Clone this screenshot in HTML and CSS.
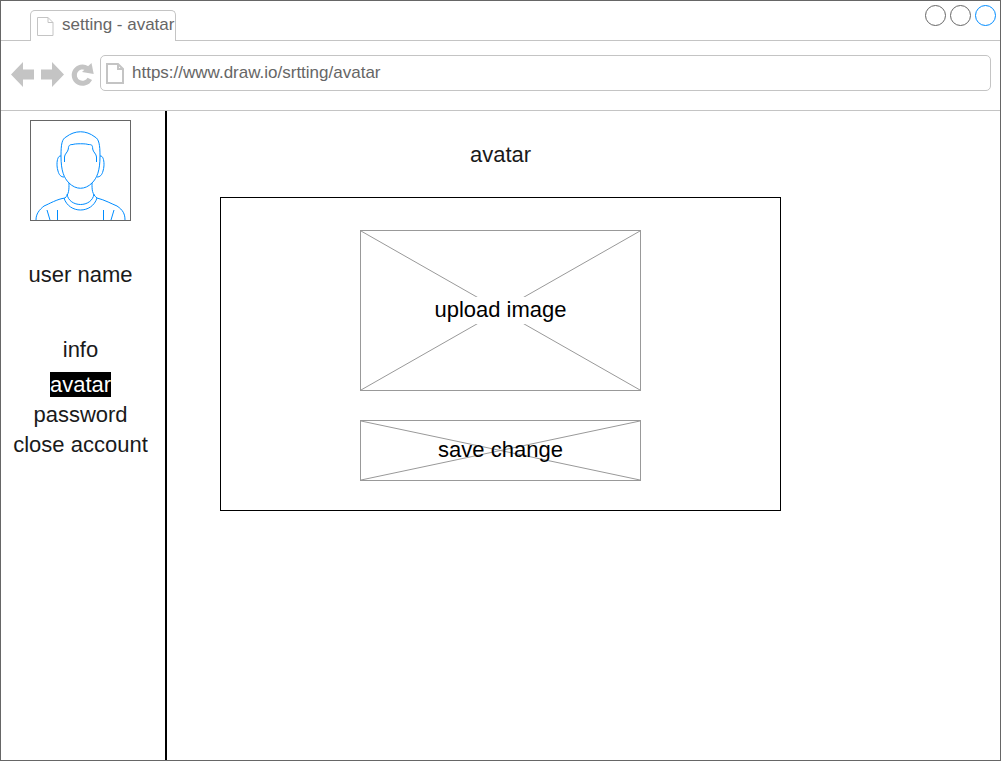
FILE: index.html
```html
<!DOCTYPE html>
<html lang="en">
<head>
<meta charset="utf-8">
<meta name="viewport" content="width=device-width, initial-scale=1">
<title>setting - avatar</title>
<link rel="stylesheet" href="styles.css">
</head>
<body>
<div class="browser">
  <header class="tab-strip">
    <div class="tab">
      <svg class="tab-icon" width="17" height="20" viewBox="0 0 17 20" aria-hidden="true">
        <path d="M.5.5H11L16 5.500V18.500H.5ZM11 .5V5.500H16"/>
      </svg>
      <span class="tab-title">setting - avatar</span>
    </div>
    <div class="window-controls">
      <button class="window-button" type="button" aria-label="Minimize"></button>
      <button class="window-button" type="button" aria-label="Maximize"></button>
      <button class="window-button window-button-close" type="button" aria-label="Close"></button>
    </div>
  </header>
  <div class="toolbar">
    <button class="tool" type="button" aria-label="Back">
      <svg width="23" height="25" viewBox="0 0 23 25" aria-hidden="true"><path class="fill" d="M0 12.500 12 0V7.500H23V17.500H12V25Z"/></svg>
    </button>
    <button class="tool" type="button" aria-label="Forward">
      <svg width="23" height="25" viewBox="0 0 23 25" aria-hidden="true"><path class="fill" d="M23 12.500 11 0V7.500H0V17.500H11V25Z"/></svg>
    </button>
    <button class="tool" type="button" aria-label="Reload">
      <svg class="reload" width="22" height="23" viewBox="0 0 22 23" aria-hidden="true"><path class="ring" d="M16 5.300A8.200 8.200 0 1 0 18.800 15.800"/><path class="fill" d="M20.500 0 22.700 11 11 9Z"/></svg>
    </button>
    <label class="address">
      <svg class="address-icon" width="18" height="21" viewBox="0 0 18 21" aria-hidden="true">
        <path d="M1 1H12L17 6V20H1ZM12 1V6H17"/>
      </svg>
      <input class="address-input" type="text" aria-label="Address" value="https://www.draw.io/srtting/avatar">
    </label>
  </div>
  <div class="page">
    <aside class="sidebar">
      <svg class="avatar" viewBox="0 0 99 99" role="img" aria-label="User picture">
        <path d="M30 35C30 23 31 18 35 16C44 9 55 9 64 16C68 18 69 24 69 35"/>
        <path d="M33.500 41V36C33.500 33 37 31 37.300 28C37.500 24 39 23.500 42 23.500C43 22.500 56 22.500 57 23.500C61 23.500 61.500 24 61.700 28C62 31 65.500 33 65.500 36V41"/>
        <path d="M30 35C30 50 33 57 38 62C45 69 54 69 61 62C66 57 69 50 69 35"/>
        <path d="M30 35C26 34 25 44 27 50C28 54 30 56 33 56M69 35C73 34 74 44 72 50C71 54 69 56 66 56"/>
        <path d="M38 62C38 69 38 73 34 77C26 78 18 83 13 85C8 89 5 93 5 99M61 62C61 69 61 73 66 77C74 79 81 83 86 85C92 89 94 93 94 99"/>
        <path d="M36 73C38 87 61 87 63 73M33 77C38 93 61 93 66 77"/>
        <path d="M16 89 19 99M26.500 89V99M72.500 89V99M83 89 80 99"/>
      </svg>
      <p class="user-name">user name</p>
      <nav class="menu">
        <a class="menu-link" href="#info">info</a>
        <a class="menu-link menu-link-current" href="#avatar" aria-current="page">avatar</a>
        <a class="menu-link" href="#password">password</a>
        <a class="menu-link" href="#close">close account</a>
      </nav>
    </aside>
    <main class="content">
      <h1 class="title">avatar</h1>
      <section class="card">
        <button class="placeholder placeholder-image" type="button">
          <svg class="cross" viewBox="0 0 100 100" preserveAspectRatio="none" aria-hidden="true"><path d="M0 0 100 100M100 0 0 100"/></svg>
          <span class="placeholder-label">upload image</span>
        </button>
        <button class="placeholder placeholder-action" type="button">
          <svg class="cross" viewBox="0 0 100 100" preserveAspectRatio="none" aria-hidden="true"><path d="M0 0 100 100M100 0 0 100"/></svg>
          <span class="placeholder-label">save change</span>
        </button>
      </section>
    </main>
  </div>
</div>
</body>
</html>
```
FILE: styles.css
```css
* {
  box-sizing: border-box;
}

body {
  margin: 0;
  padding: 0 1px 1px 0;
  background: #fff;
  color: #1a1a1a;
  font: 22px/25px "Liberation Sans", Arial, sans-serif;
}

button,
input {
  margin: 0;
  padding: 0;
  border: 0;
  background: none;
  color: inherit;
  font: inherit;
}

svg {
  display: block;
  fill: none;
}

.browser {
  display: flex;
  flex-direction: column;
  min-height: calc(100vh - 1px);
  border: 1px solid #666;
}

/* Tab strip */
.tab-strip {
  display: flex;
  justify-content: space-between;
  padding: 4px 4px 0 29px;
  border-bottom: 1px solid #c4c4c4;
}

.tab {
  display: flex;
  align-items: center;
  gap: 8px;
  min-width: 146px;
  height: 31px;
  margin: 5px 0 -1px;
  padding-left: 6px;
  border: 1px solid #c4c4c4;
  border-bottom: 0;
  border-radius: 5px 5px 0 0;
  background: #fff;
}

.tab-icon {
  margin-top: 2px;
  stroke: #c4c4c4;
}

.tab-title {
  color: #666;
  font-size: 17px;
  line-height: 20px;
  margin-bottom: 2px;
}

.window-controls {
  display: flex;
  gap: 4px;
}

.window-button {
  width: 21px;
  height: 21px;
  border: 1px solid #666;
  border-radius: 50%;
}

.window-button-close {
  border-color: #008cff;
}

/* Toolbar */
.toolbar {
  display: flex;
  align-items: center;
  gap: 7px;
  padding: 14px 9px 19px 10px;
  border-bottom: 1px solid #c4c4c4;
}

.tool {
  flex: none;
  padding-top: 2px;
}

.reload {
  overflow: visible;
}

.fill {
  fill: #c4c4c4;
}

.ring {
  stroke: #c4c4c4;
  stroke-width: 5;
}

.address {
  display: flex;
  flex: 1;
  align-items: center;
  gap: 8px;
  height: 36px;
  padding: 0 5px;
  border: 1px solid #c4c4c4;
  border-radius: 5px;
}

.address-icon {
  flex: none;
  stroke: #c4c4c4;
  stroke-width: 2;
}

.address-input {
  flex: 1;
  min-width: 0;
  color: #666;
  font-size: 17px;
  line-height: 20px;
}

/* Page */
.page {
  display: flex;
  flex: 1;
}

.sidebar {
  display: flex;
  flex: none;
  flex-direction: column;
  align-items: center;
  width: 166px;
  padding: 9px 5px 20px 0;
  border-right: 2px solid #000;
}

.avatar {
  width: 101px;
  height: 101px;
  border: 1px solid #666;
  stroke: #008cff;
}

.user-name {
  margin: 41px 0 50px;
}

.menu {
  display: flex;
  flex-direction: column;
  align-items: center;
  gap: 5px;
}

.menu-link {
  color: inherit;
  text-decoration: none;
}

.menu-link-current {
  margin-top: 5px;
  background: #000;
  color: #fff;
}

.content {
  flex: 1;
  min-width: 0;
  padding: 31px 53px;
}

.title {
  max-width: 561px;
  margin: 0 0 30px;
  font-size: 22px;
  font-weight: 400;
  text-align: center;
}

.card {
  display: flex;
  flex-direction: column;
  align-items: center;
  gap: 29px;
  max-width: 561px;
  padding: 32px 20px 29px;
  border: 1px solid #000;
}

.placeholder {
  position: relative;
  width: 100%;
  max-width: 281px;
  padding-bottom: 2px;
  border: 1px solid #999;
  color: #000;
}

.placeholder-image {
  height: 161px;
}

.placeholder-action {
  height: 61px;
}

.cross {
  position: absolute;
  inset: 0;
  width: 100%;
  height: 100%;
  stroke: #999;
}

.cross path {
  vector-effect: non-scaling-stroke;
}

.placeholder-label {
  position: relative;
}

.placeholder-image .placeholder-label {
  padding-bottom: 2px;
  background: #fff;
}
```
